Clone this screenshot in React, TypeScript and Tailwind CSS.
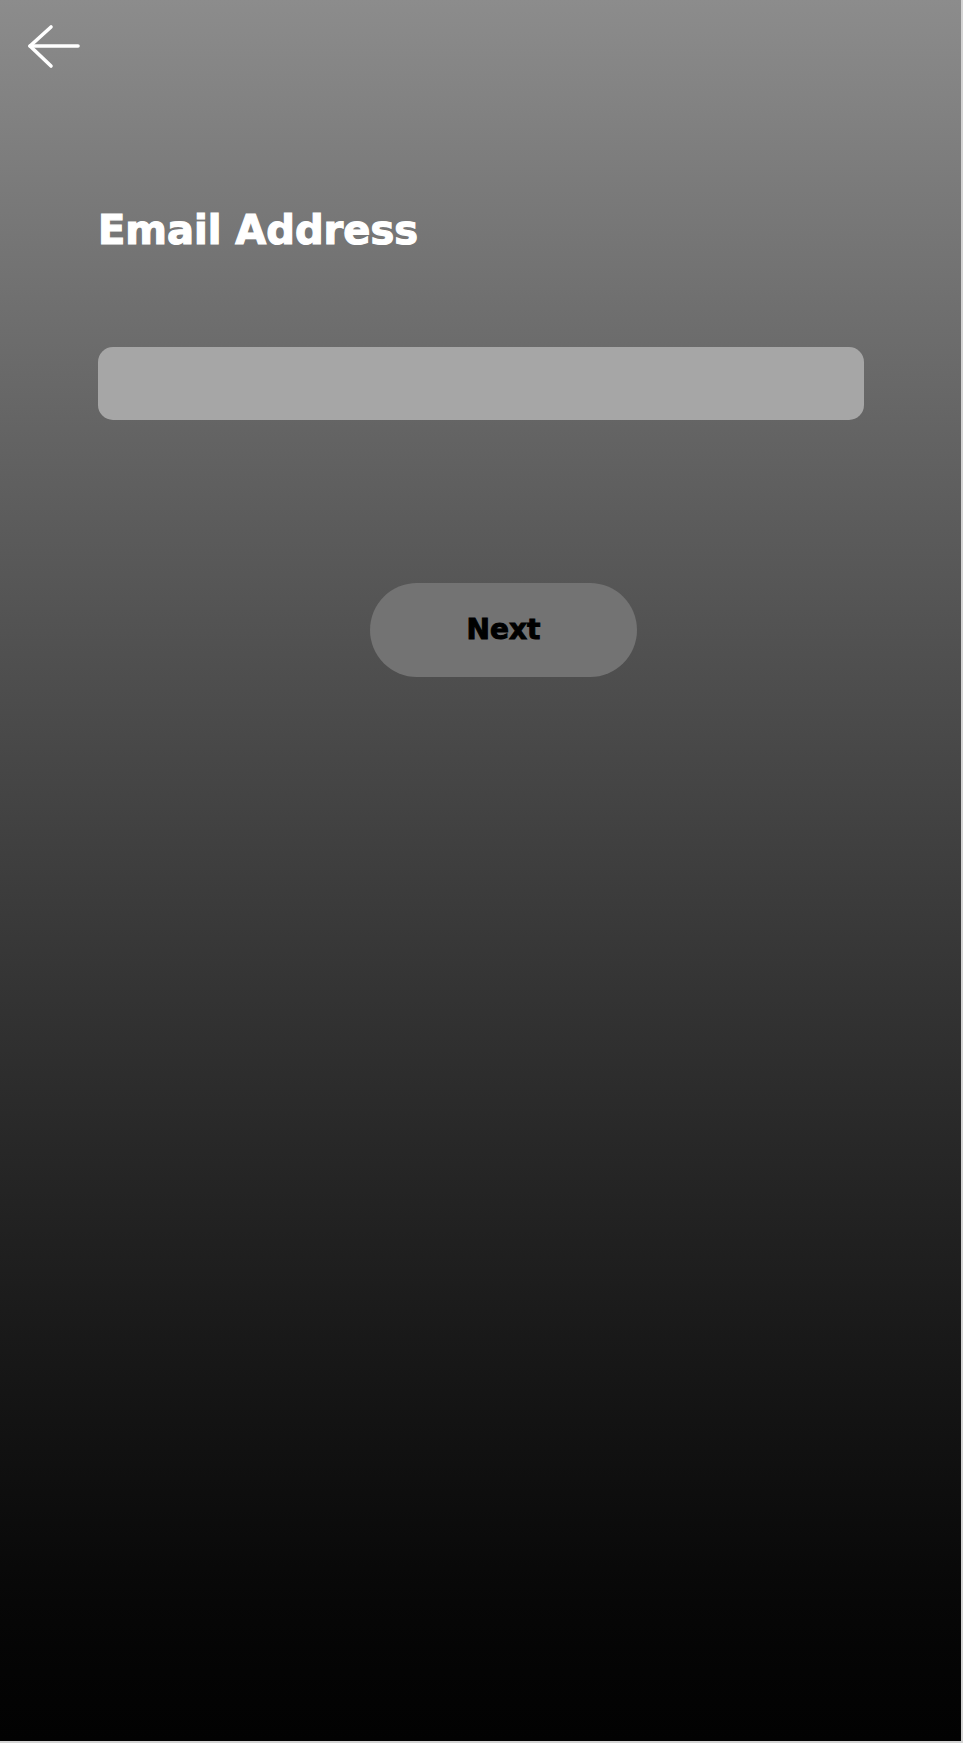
export default function App() {
  return (
    <div className="min-h-screen bg-[#d4d4d4]">
      <div className="flex h-[1741px] w-[961px] flex-col bg-gradient-to-b from-[#8c8c8c] to-[#020202] font-['DejaVu_Sans',sans-serif]">
        <button type="button" aria-label="Back" className="ml-[26px] mt-[22px] h-[48px] w-[56px]">
          <svg width="56" height="48" viewBox="0 0 56 48" fill="none" stroke="white" strokeWidth="3.6" strokeLinecap="round" strokeLinejoin="round">
            <path d="M4 24 H52" />
            <path d="M25 5 L4 24 L25 44" />
          </svg>
        </button>
        <h1 className="ml-[98px] mt-[140px] text-[40px] font-bold leading-none text-white [-webkit-text-stroke:1.2px_white]">
          Email Address
        </h1>
        <input
          type="email"
          aria-label="Email Address"
          className="ml-[98px] mt-[97px] h-[73px] w-[766px] rounded-[15px] bg-[#a6a6a6] px-5 text-2xl text-black outline-none"
        />
        <button
          type="button"
          className="ml-[370px] mt-[163px] h-[94px] w-[267px] rounded-full bg-[#737373] text-[28px] font-bold text-black [-webkit-text-stroke:1px_black]"
        >
          Next
        </button>
      </div>
    </div>
  );
}
